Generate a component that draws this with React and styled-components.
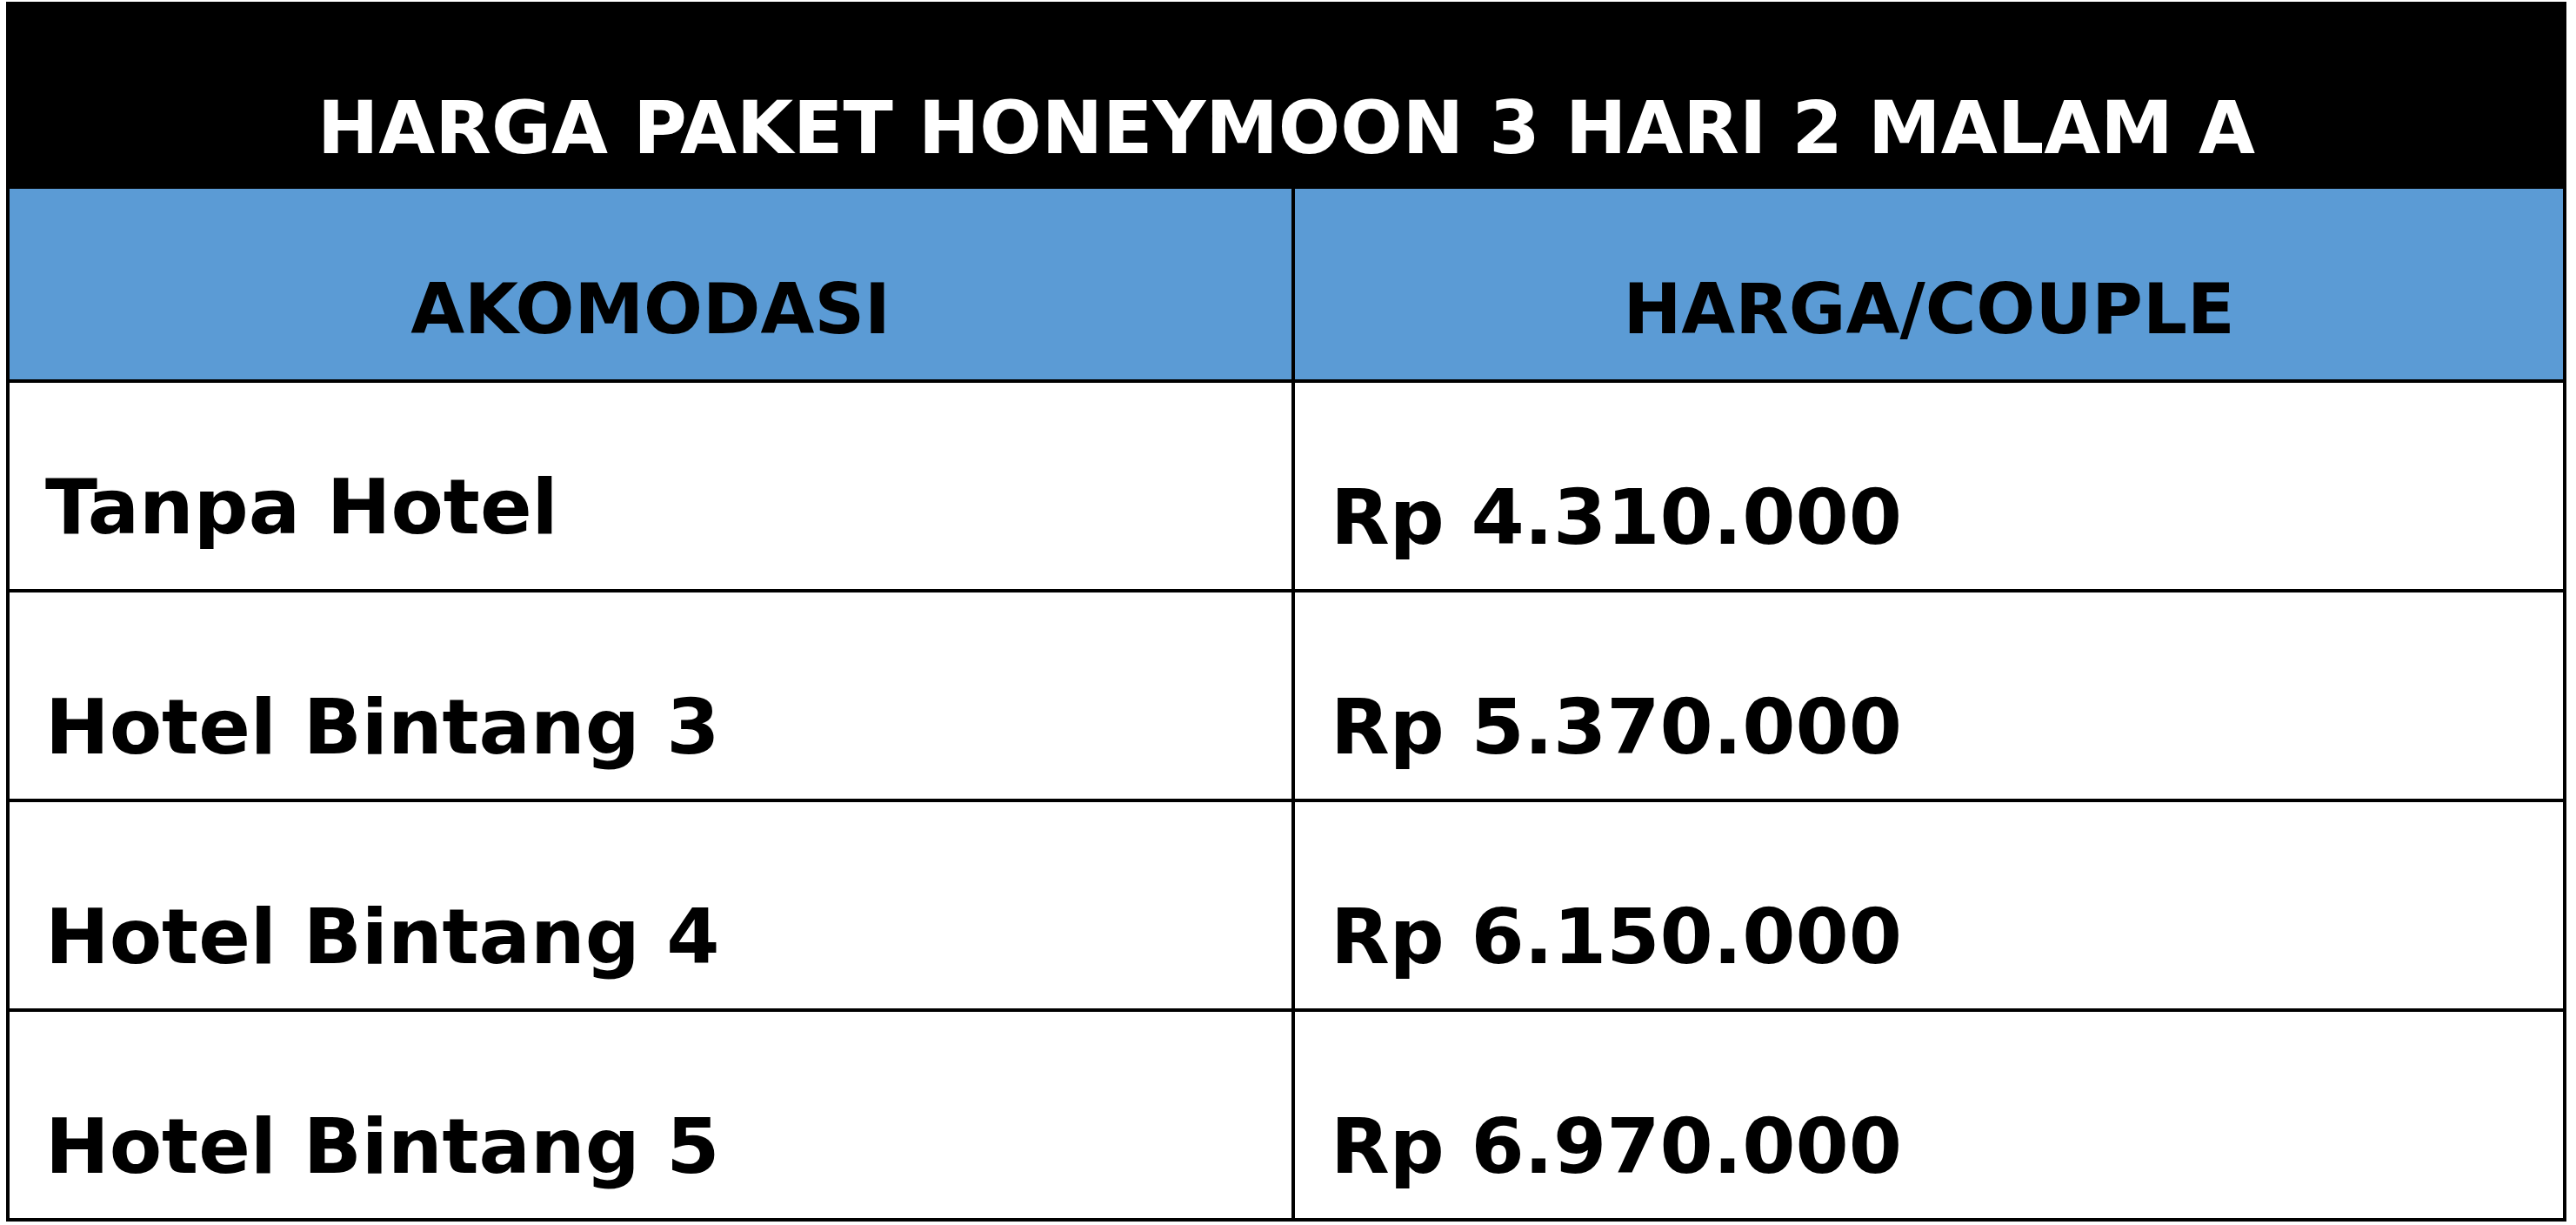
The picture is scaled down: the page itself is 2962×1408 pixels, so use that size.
import React from "react";
import styled, { createGlobalStyle } from "styled-components";

const GlobalStyle = createGlobalStyle`
  body {
    margin: 0;
    background: #fff;
    font-family: "DejaVu Sans", "Liberation Sans", sans-serif;
  }
`;

const Page = styled.div`
  padding: 2px 0 0 7px;
`;

const PriceTable = styled.div`
  width: 2944px;
  box-sizing: border-box;
  border: 4px solid #000;
  background: #fff;
`;

const Title = styled.div`
  height: 211px;
  box-sizing: border-box;
  background: #000;
  color: #fff;
  display: flex;
  align-items: flex-end;
  justify-content: center;
  padding-bottom: 28px;
  font-size: 84px;
  font-weight: bold;
  line-height: 1;
`;

const Row = styled.div`
  display: grid;
  grid-template-columns: 1478px 1fr;
  height: ${(p) => (p.$head ? "219px" : "241px")};
  box-sizing: border-box;
  border-top: ${(p) => (p.$head ? "none" : "4px solid #000")};
  background: ${(p) => (p.$head ? "#5b9bd5" : "#fff")};
`;

const Cell = styled.div`
  display: flex;
  align-items: flex-end;
  justify-content: ${(p) => (p.$head ? "center" : "flex-start")};
  box-sizing: border-box;
  padding: 0 0 ${(p) => p.$bottom || 38}px ${(p) => (p.$head ? 0 : 41)}px;
  border-right: ${(p) => (p.$first ? "4px solid #000" : "none")};
  color: #000;
  font-size: ${(p) => (p.$head ? 80 : 88)}px;
  font-weight: bold;
  line-height: 1;
  white-space: nowrap;
`;

const rows = [
  { name: "Tanpa Hotel", price: "Rp 4.310.000", lift: 50 },
  { name: "Hotel Bintang 3", price: "Rp 5.370.000" },
  { name: "Hotel Bintang 4", price: "Rp 6.150.000" },
  { name: "Hotel Bintang 5", price: "Rp 6.970.000" },
];

const App = () => {
  return (
    <Page>
      <GlobalStyle />
      <PriceTable>
        <Title>HARGA PAKET HONEYMOON 3 HARI 2 MALAM A</Title>
        <Row $head>
          <Cell $head $first $bottom={40}>AKOMODASI</Cell>
          <Cell $head $bottom={40}>HARGA/COUPLE</Cell>
        </Row>
        {rows.map((r) => (
          <Row key={r.name}>
            <Cell $first $bottom={r.lift}>{r.name}</Cell>
            <Cell>{r.price}</Cell>
          </Row>
        ))}
      </PriceTable>
    </Page>
  );
};

export default App;
